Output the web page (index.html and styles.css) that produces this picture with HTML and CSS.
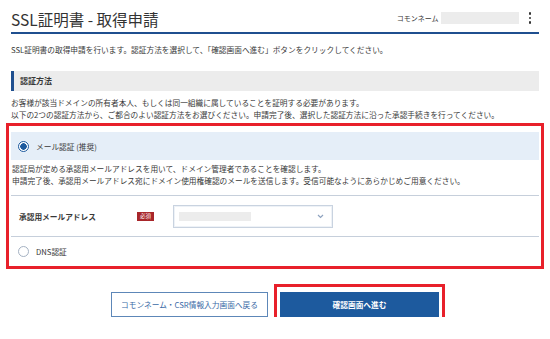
FILE: index.html
```html
<!DOCTYPE html>
<html>

<head>
    <title>SSL証明書 - 取得申請</title>
    <link rel="stylesheet" href="styles.css">
</head>

<body>
    <header class="page-header">
        <h1>SSL証明書 - 取得申請</h1>
        <div class="header-info">
            <span class="cn-label">コモンネーム</span>
            <span class="cn-value"></span>
            <span class="kebab"><i></i><i></i><i></i></span>
        </div>
    </header>

    <p class="lead">SSL証明書の取得申請を行います。認証方法を選択して、「確認画面へ進む」ボタンをクリックしてください。</p>

    <h2 class="section-title">認証方法</h2>
    <p class="section-text">お客様が該当ドメインの所有者本人、もしくは同一組織に属していることを証明する必要があります。<br>以下の2つの認証方法から、ご都合のよい認証方法をお選びください。申請完了後、選択した認証方法に沿った承認手続きを行ってください。</p>

    <div class="auth-box">
        <div class="option selected">
            <span class="radio"></span>
            <span>メール認証 (推奨)</span>
        </div>
        <p class="option-desc">認証局が定める承認用メールアドレスを用いて、ドメイン管理者であることを確認します。<br>申請完了後、承認用メールアドレス宛にドメイン使用権確認のメールを送信します。受信可能なようにあらかじめご用意ください。</p>
        <div class="field-row">
            <label class="field-label">承認用メールアドレス</label>
            <span class="required">必須</span>
            <div class="select">
                <span class="placeholder"></span>
                <svg class="chevron" width="7" height="5" viewBox="0 0 7 5"><path d="M1 1 L3.5 3.5 L6 1" fill="none" stroke="#8ea2bf" stroke-width="1.2"/></svg>
            </div>
        </div>
        <div class="option">
            <span class="radio"></span>
            <span>DNS認証</span>
        </div>
    </div>

    <div class="actions">
        <button type="button" class="btn btn-back">コモンネーム・CSR情報入力画面へ戻る</button>
        <button type="button" class="btn btn-next">確認画面へ進む</button>
    </div>
</body>

</html>
```

FILE: styles.css
```css
/* Reset default margin and padding */
* {
    margin: 0;
    padding: 0;
    box-sizing: border-box;
}

body {
    font-family: "Noto Sans CJK JP", "Noto Sans", sans-serif;
    font-size: 7.7px;
    color: #383838;
    background-color: #fff;
    padding: 6px 11px 0;
}

.page-header {
    display: flex;
    justify-content: space-between;
    align-items: center;
    height: 28px;
    border-bottom: 2px solid #1f4f8f;
}

.page-header h1 {
    font-size: 15.5px;
    font-weight: normal;
    line-height: 26px;
    color: #333;
}

.header-info {
    display: flex;
    align-items: center;
    margin-top: -2px;
}

.cn-label {
    font-size: 7px;
    margin-right: 2px;
}

.cn-value {
    width: 78px;
    height: 12px;
    background-color: #ececec;
}

.kebab {
    display: flex;
    flex-direction: column;
    gap: 2px;
    margin: 0 8px 0 10px;
}

.kebab i {
    width: 2.5px;
    height: 2.5px;
    border-radius: 50%;
    background-color: #333;
}

.lead {
    margin-top: 10px;
    line-height: 12px;
}

.section-title {
    margin-top: 15px;
    height: 20px;
    line-height: 20px;
    font-size: 8px;
    font-weight: bold;
    background-color: #ececec;
    border-left: 3px solid #1f4f8f;
    padding-left: 6px;
}

.section-text {
    margin-top: 6px;
    line-height: 12px;
}

.auth-box {
    margin: 2px -5px 0;
    border: 3px solid #e8202a;
    padding: 6px 2px 0;
}

.option {
    display: flex;
    align-items: center;
    gap: 7px;
    height: 29px;
    padding-left: 7px;
}

.option.selected {
    height: 28px;
    background-color: #e5eef8;
}

.radio {
    width: 11px;
    height: 11px;
    border-radius: 50%;
    border: 1px solid #a4b1c2;
    background-color: #fff;
}

.selected .radio {
    border: 1.5px solid #1d5a9e;
    background: radial-gradient(circle, #1d5a9e 0 3px, #fff 3.5px);
}

.option-desc {
    padding: 3px 0 9px 1px;
    line-height: 11.5px;
}

.field-row {
    display: flex;
    align-items: center;
    height: 42px;
    border-top: 1px solid #c6cfdb;
    border-bottom: 1px solid #c6cfdb;
    padding-left: 8px;
}

.field-label {
    width: 118px;
    font-weight: bold;
}

.required {
    width: 17px;
    height: 9px;
    line-height: 9px;
    font-size: 5.5px;
    text-align: center;
    color: #fff;
    background-color: #a8262a;
}

.select {
    display: flex;
    align-items: center;
    justify-content: space-between;
    width: 160px;
    height: 23px;
    margin-left: 19px;
    padding: 0 8px 0 5px;
    border: 1px solid #c9d3e0;
    box-shadow: inset 0 0 0 1px #eef2f7;
}

.placeholder {
    width: 72px;
    height: 9px;
    background-color: #ececec;
}

.actions {
    display: flex;
    justify-content: center;
    align-items: center;
    gap: 12px;
    margin-top: 23px;
}

.btn {
    height: 25px;
    font-family: inherit;
    font-size: 7.7px;
    cursor: pointer;
}

.btn-back {
    width: 157px;
    background-color: #fff;
    color: #3a6aa6;
    border: 1px solid #5d87b8;
}

.btn-next {
    position: relative;
    width: 159px;
    background-color: #1d5a9e;
    color: #fff;
    font-weight: bold;
    border: none;
}

/* red highlight frame around the next button */
.btn-next::after {
    content: "";
    position: absolute;
    top: -8px;
    bottom: -7px;
    left: -6px;
    right: -6px;
    border: 3px solid #e8202a;
}
```
